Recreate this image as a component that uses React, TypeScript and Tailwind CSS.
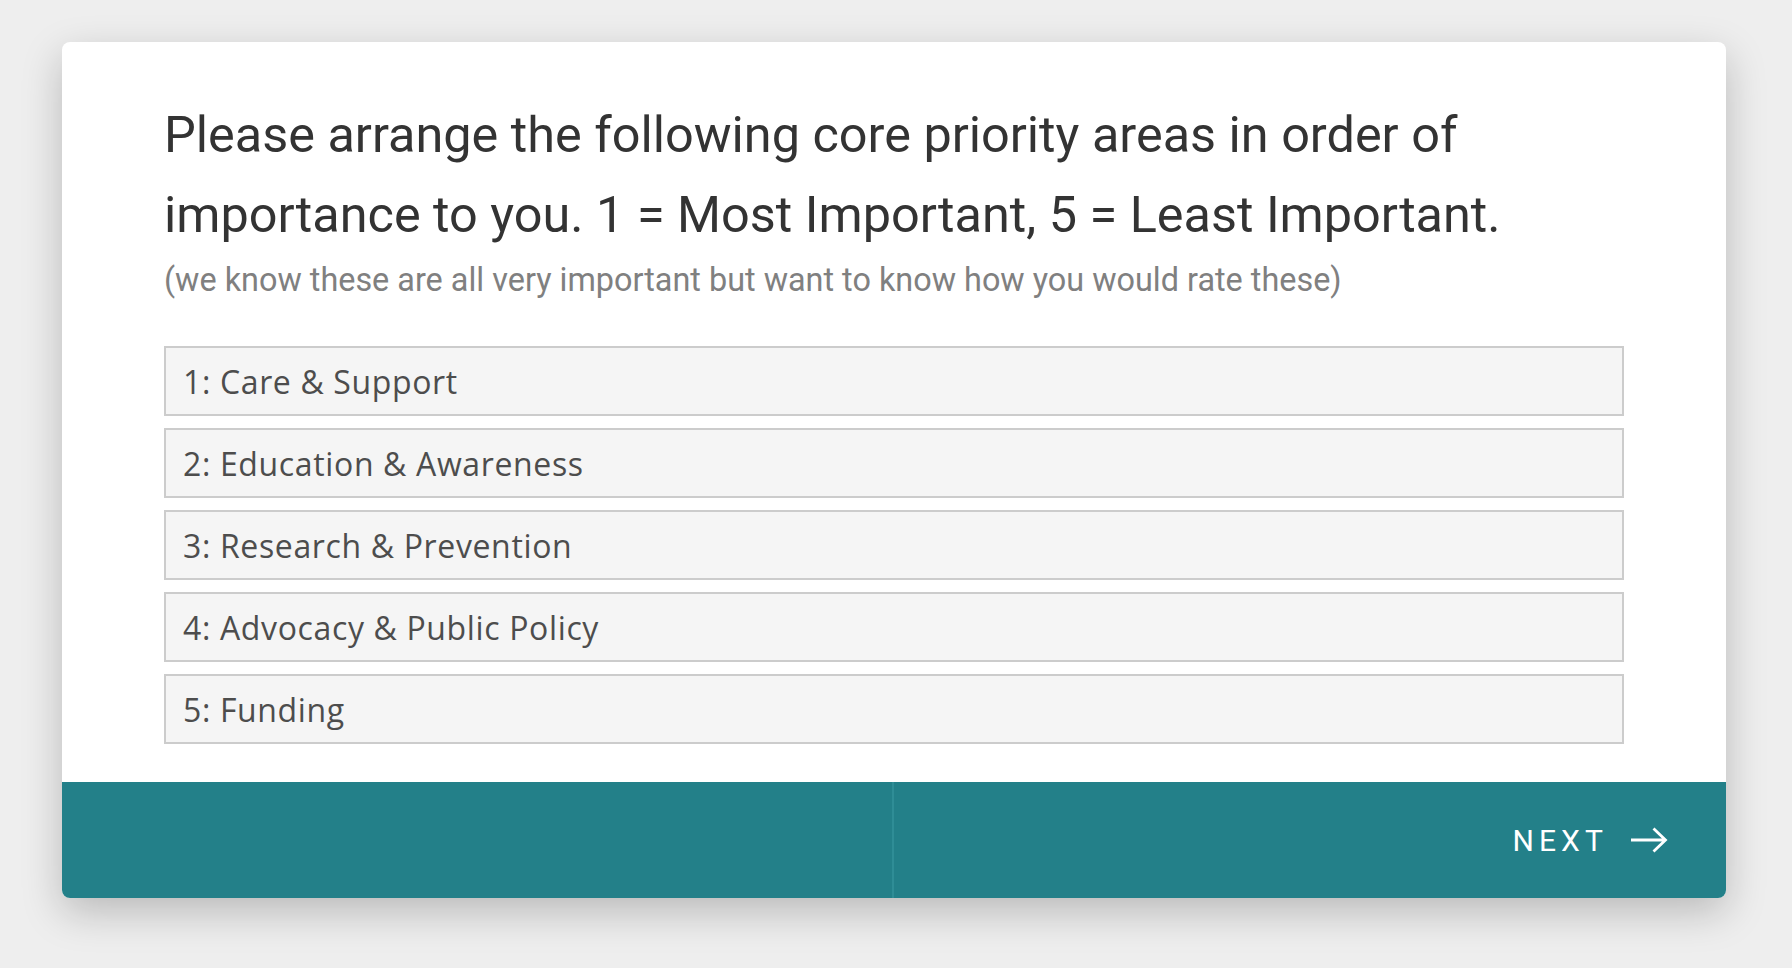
const items = [
  "1: Care & Support",
  "2: Education & Awareness",
  "3: Research & Prevention",
  "4: Advocacy & Public Policy",
  "5: Funding",
];

function LongArrow() {
  return (
    <svg width="38" height="26" viewBox="0 0 38 26" fill="none">
      <path
        d="M1 13 H35.5 M23.5 1.5 L35.5 13 L23.5 24.5"
        stroke="white"
        strokeWidth="2.8"
        strokeLinejoin="miter"
      />
    </svg>
  );
}

function App() {
  return (
    <div className="min-h-screen bg-[#eeeeee] pl-[62px] pt-[42px]">
      <div className="w-[1664px] overflow-hidden rounded-lg bg-white shadow-[0_14px_40px_rgba(0,0,0,0.22)]">
        <div className="px-[102px] pt-[53px] pb-[38px]">
          <h1 className="font-['Roboto',sans-serif] text-[50.4px] leading-[80px] font-normal text-[#333333]">
            Please arrange the following core priority areas in order of
            importance to you. 1 = Most Important, 5 = Least Important.
          </h1>
          <p className="mt-[3px] font-['Roboto',sans-serif] text-[32.4px] leading-[45px] text-[#808080]">
            (we know these are all very important but want to know how you would
            rate these)
          </p>
          <div className="mt-[43px] flex flex-col gap-[12px]">
            {items.map((item) => (
              <div
                key={item}
                className="flex h-[70px] items-center border-2 border-[#cccccc] bg-[#f5f5f5] px-[17px] pt-[2px] font-['Open_Sans',sans-serif] text-[32px] tracking-[0.02em] text-[#4d4d4d]"
              >
                {item}
              </div>
            ))}
          </div>
        </div>
        <div className="grid h-[116px] grid-cols-2 bg-[#238089]">
          <div className="border-r-2 border-[#2f8d96]"></div>
          <button className="flex items-center justify-end gap-[22px] pr-[58px] font-['Roboto',sans-serif] text-[30px] tracking-[0.17em] text-white">
            NEXT
            <LongArrow />
          </button>
        </div>
      </div>
    </div>
  );
}

export default App;
